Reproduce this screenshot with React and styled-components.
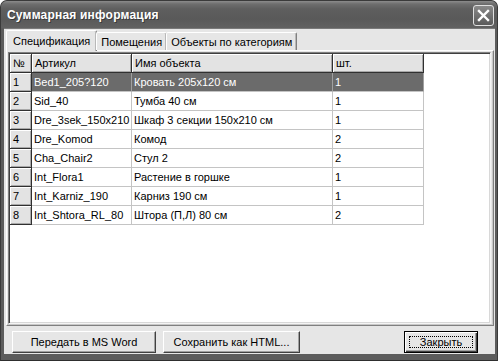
import React from "react";
import styled, { createGlobalStyle } from "styled-components";

const GlobalStyle = createGlobalStyle`
  html, body { margin: 0; padding: 0; background: #fff; }
  body { font-family: "Liberation Sans", Arial, sans-serif; font-size: 11px; }
`;

const tabs = ["Спецификация", "Помещения", "Объекты по категориям"];

const rows = [
  ["Bed1_205?120", "Кровать 205x120 см", "1"],
  ["Sid_40", "Тумба 40 см", "1"],
  ["Dre_3sek_150x210", "Шкаф 3 секции 150x210 см", "1"],
  ["Dre_Komod", "Комод", "2"],
  ["Cha_Chair2", "Стул 2", "2"],
  ["Int_Flora1", "Растение в горшке", "1"],
  ["Int_Karniz_190", "Карниз 190 см", "1"],
  ["Int_Shtora_RL_80", "Штора (П,Л) 80 см", "2"],
];

export default function App() {
  return (
    <>
      <GlobalStyle />
      <Window>
        <TitleBar>
          <Title>Суммарная информация</Title>
          <CloseButton>
            <svg width="21" height="21" viewBox="0 0 21 21">
              <path d="M6 6 L15 15 M15 6 L6 15" stroke="#fff" strokeWidth="2.4" strokeLinecap="square" />
            </svg>
          </CloseButton>
        </TitleBar>
        <Client>
          <TabStrip>
            {tabs.map((t, i) => (
              <Tab key={t} $active={i === 0}>{t}</Tab>
            ))}
          </TabStrip>
          <TabPanel>
            <Grid>
              <Row>
                <HeadCell>№</HeadCell>
                <HeadCell>Артикул</HeadCell>
                <HeadCell>Имя объекта</HeadCell>
                <HeadCell>шт.</HeadCell>
              </Row>
              {rows.map((r, i) => (
                <Row key={i}>
                  <HeadCell>{i + 1}</HeadCell>
                  {r.map((c, j) => (
                    <Cell key={j} $selected={i === 0}>{c}</Cell>
                  ))}
                </Row>
              ))}
            </Grid>
          </TabPanel>
          <ButtonBar>
            <Button $w={144}>Передать в MS Word</Button>
            <Button $w={137}>Сохранить как HTML...</Button>
            <Spacer />
            <Button $w={74} $default>
              <Focus>Закрыть</Focus>
            </Button>
          </ButtonBar>
        </Client>
      </Window>
    </>
  );
}

const Window = styled.div`
  width: 498px;
  height: 361px;
  box-sizing: border-box;
  display: flex;
  flex-direction: column;
  background: #5c5c5c;
  border-radius: 7px 7px 0 0;
  border: 1px solid #3a3a3a;
  border-bottom: 1px solid #2e2e2e;
  overflow: hidden;
`;

const TitleBar = styled.div`
  height: 27px;
  flex: none;
  display: flex;
  align-items: center;
  justify-content: space-between;
  padding: 0 3px 0 6px;
  background: linear-gradient(to bottom, #8c8c8c 0px, #6e6e6e 3px, #5e5e5e 8px, #595959 18px, #616161 27px);
`;

const Title = styled.div`
  color: #fff;
  font-weight: bold;
  font-size: 12px;
  letter-spacing: 0.2px;
  text-shadow: 1px 1px 0 #3a3a3a;
`;

const CloseButton = styled.div`
  width: 21px;
  height: 21px;
  box-sizing: border-box;
  border: 1px solid #e0e0e0;
  border-radius: 3px;
  background: linear-gradient(to bottom, #8a8a8a, #5a5a5a);
  display: flex;
  align-items: center;
  justify-content: center;
  margin-top: 1px;
  svg { display: block; margin: -1px; }
`;

const Client = styled.div`
  flex: 1;
  margin: 0 2px 6px 3px;
  background: #e6e6e6;
  display: flex;
  flex-direction: column;
  padding: 1px 1px 0 2px;
  border-top: 1px solid #7a7a7a;
`;

const TabStrip = styled.div`
  display: flex;
  align-items: flex-end;
  height: 20px;
  position: relative;
  z-index: 1;
`;

const Tab = styled.div`
  box-sizing: border-box;
  height: ${({ $active }) => ($active ? "21px" : "18px")};
  margin-bottom: ${({ $active }) => ($active ? "-1px" : "0")};
  padding: 0 ${({ $active }) => ($active ? "6px" : "4px")};
  display: flex;
  align-items: center;
  background: #e6e6e6;
  color: #000;
  border-top: 1px solid #fff;
  border-left: 1px solid #fff;
  border-right: 1px solid #808080;
  box-shadow: inset -1px 0 0 #b8b8b8;
  border-radius: 2px 2px 0 0;
  margin-left: ${({ $active }) => ($active ? "0" : "-1px")};
`;

const TabPanel = styled.div`
  height: 276px;
  box-sizing: border-box;
  border-top: 1px solid #fff;
  border-left: 1px solid #fff;
  border-right: 1px solid #808080;
  border-bottom: 1px solid #808080;
  box-shadow: inset -1px -1px 0 #c8c8c8;
  padding: 1px 2px 1px 1px;
`;

const Grid = styled.div`
  height: 100%;
  box-sizing: border-box;
  background: #fff;
  border-top: 1px solid #808080;
  border-left: 1px solid #808080;
  border-right: 1px solid #f4f4f4;
  border-bottom: 1px solid #f4f4f4;
  box-shadow: inset 1px 1px 0 #404040, inset -1px -1px 0 #d8d8d8;
  padding: 1px 0 0 1px;
`;

const Row = styled.div`
  display: grid;
  grid-template-columns: 22px 100px 201px 91px;
  height: 19px;
`;

const HeadCell = styled.div`
  box-sizing: border-box;
  height: 19px;
  background: #e3e3e3;
  border-right: 1px solid #303030;
  border-bottom: 1px solid #303030;
  box-shadow: inset 1px 1px 0 #fff, inset -1px -1px 0 #a8a8a8;
  padding: 0 0 0 3px;
  line-height: 18px;
  color: #000;
  white-space: nowrap;
  overflow: hidden;
`;

const Cell = styled.div`
  box-sizing: border-box;
  height: 19px;
  background: ${({ $selected }) => ($selected ? "#6b6b6b" : "#fff")};
  color: ${({ $selected }) => ($selected ? "#fff" : "#000")};
  border-right: 1px solid ${({ $selected }) => ($selected ? "#a0a0a0" : "#c4c4c4")};
  border-bottom: 1px solid #c4c4c4;
  padding: 0 0 0 2px;
  line-height: 18px;
  white-space: nowrap;
  overflow: hidden;
`;

const ButtonBar = styled.div`
  display: flex;
  align-items: center;
  gap: 7px;
  padding: 5px 16px 0 6px;
`;

const Spacer = styled.div`
  flex: 1;
`;

const Button = styled.div`
  width: ${({ $w }) => $w}px;
  height: 22px;
  box-sizing: border-box;
  display: flex;
  align-items: center;
  justify-content: center;
  background: #e6e6e6;
  color: #000;
  border-top: 1px solid #fff;
  border-left: 1px solid #fff;
  border-right: 1px solid #404040;
  border-bottom: 1px solid #404040;
  box-shadow: inset -1px -1px 0 #a0a0a0;
  ${({ $default }) =>
    $default &&
    `
    border: 1px solid #000;
    box-shadow: inset 1px 1px 0 #fff, inset -1px -1px 0 #404040, inset -2px -2px 0 #a0a0a0;
  `}
`;

const Focus = styled.span`
  box-sizing: border-box;
  width: calc(100% - 8px);
  height: calc(100% - 8px);
  border: 1px dotted #000;
  display: flex;
  align-items: center;
  justify-content: center;
`;
